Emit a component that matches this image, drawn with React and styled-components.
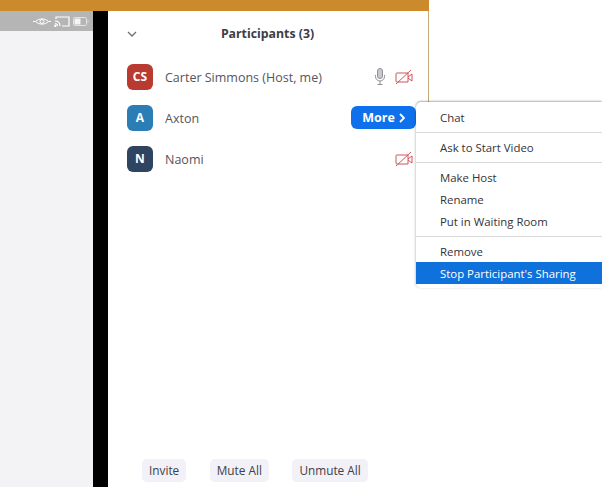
import React from 'react';
import styled, { createGlobalStyle } from 'styled-components';

const Global = createGlobalStyle`
  html, body { margin: 0; padding: 0; background: #fff; }
  body { font-family: "Open Sans", "Noto Sans", sans-serif; overflow: hidden; }
  * { box-sizing: border-box; }
`;

const Page = styled.div`
  position: relative;
  width: 602px;
  height: 487px;
  display: flex;
  flex-direction: column;
  overflow: hidden;
`;

const TopBar = styled.div`
  height: 11px;
  width: 429px;
  flex: none;
  background: #cb8a2c;
`;

const Body = styled.div`
  flex: 1;
  display: flex;
  min-height: 0;
`;

const LeftPane = styled.div`
  width: 93px;
  flex: none;
  background: #f3f3f6;
`;

const StatusStrip = styled.div`
  height: 20px;
  background: #b5b5b5;
  display: flex;
  align-items: center;
  justify-content: flex-end;
  gap: 3px;
  padding-right: 4px;
`;

const Divider = styled.div`
  width: 15px;
  flex: none;
  background: #000;
`;

const Panel = styled.div`
  width: 320px;
  flex: none;
  display: flex;
  flex-direction: column;
  background: #fff;
  padding-bottom: 5px;
`;

const PanelEdge = styled.div`
  position: absolute;
  left: 428px;
  top: 11px;
  width: 1px;
  height: 91px;
  background: #c9a87c;
`;

const Header = styled.div`
  height: 45px;
  flex: none;
  display: flex;
  align-items: center;
  padding-left: 19px;
`;

const Title = styled.div`
  flex: 1;
  text-align: center;
  font-size: 12.3px;
  font-weight: 700;
  color: #3d3d45;
  padding-right: 30px;
`;

const List = styled.div`
  flex: 1;
  display: flex;
  flex-direction: column;
`;

const Row = styled.div`
  height: 41px;
  display: flex;
  align-items: center;
  padding-left: 19px;
  padding-right: 15px;
`;

const Avatar = styled.div`
  width: 26px;
  height: 26px;
  border-radius: 6px;
  background: ${p => p.$color};
  color: #fff;
  font-size: 12px;
  font-weight: 700;
  display: flex;
  align-items: center;
  justify-content: center;
  margin-right: 12px;
`;

const Name = styled.div`
  flex: 1;
  padding-top: 1px;
  font-size: 12.5px;
  color: #55555e;
`;

const Icons = styled.div`
  display: flex;
  align-items: center;
  gap: 9px;
`;

const MoreButton = styled.div`
  width: 65px;
  height: 23px;
  margin-right: -3px;
  border-radius: 6px;
  background: #0e71eb;
  color: #fff;
  font-size: 12.5px;
  font-weight: 700;
  display: flex;
  align-items: center;
  justify-content: center;
  gap: 4px;
`;

const Footer = styled.div`
  display: flex;
  gap: 23.5px;
  padding-left: 34px;
`;

const FooterButton = styled.div`
  height: 23px;
  padding: 0 7px 2px;
  border-radius: 5px;
  background: #f1f1f7;
  color: #40404a;
  font-size: 11.8px;
  display: flex;
  align-items: center;
`;

const Menu = styled.div`
  position: absolute;
  left: 416px;
  top: 102px;
  width: 186px;
  height: 186px;
  padding-top: 4px;
  background: #fff;
  border-radius: 5px 0 0 5px;
  box-shadow: 0 -1px 2px rgba(0, 0, 0, 0.28), -1px 0 3px rgba(0, 0, 0, 0.1);
`;

const MenuItem = styled.div`
  height: 22px;
  padding-left: 24px;
  display: flex;
  align-items: center;
  font-size: 11.4px;
  color: ${p => (p.$active ? '#fff' : '#33333a')};
  background: ${p => (p.$active ? '#0e71dc' : 'transparent')};
`;

const MenuRule = styled.div`
  height: 1px;
  margin: 4px 0 3px;
  background: #d9d9d9;
`;

const Eye = () => (
  <svg width="18" height="9" viewBox="0 0 18 9" fill="none" stroke="#fff" strokeWidth="1">
    <path d="M0 4.500h2.500C6 1 12 1 15.500 4.500H18M2.500 4.500C6 8 12 8 15.500 4.500" />
    <circle cx="9" cy="4.500" r="2" />
  </svg>
);

const Cast = () => (
  <svg width="16" height="11" viewBox="0 0 16 11" fill="none" stroke="#fff" strokeWidth="1.200">
    <path d="M2 3V1h13v9H8" />
    <path d="M1 5c3 0 5 2 5 5M1 7.500c1.500 0 2.500 1 2.500 2.500" />
    <circle cx="1.300" cy="9.700" r=".6" fill="#fff" />
  </svg>
);

const Battery = () => (
  <svg width="16" height="9" viewBox="0 0 16 9" fill="none">
    <rect x="0.500" y="0.500" width="13" height="8" rx="1" stroke="#e2e2e2" />
    <rect x="1.500" y="1.500" width="6" height="6" fill="#f5f5f5" />
    <rect x="14.500" y="3" width="1" height="3" fill="#d6d6d6" />
  </svg>
);

const Chevron = () => (
  <svg width="10" height="6" viewBox="0 0 10 6" fill="none" stroke="#6e6e78" strokeWidth="1.300">
    <path d="M1 1l4 4 4-4" />
  </svg>
);

const Mic = () => (
  <svg width="12" height="17" viewBox="0 0 12 17" fill="none" stroke="#8f8f96" strokeWidth="1">
    <rect x="3.500" y="0.500" width="5" height="10" rx="2.500" fill="#c9c9cd" />
    <path d="M1.500 7v1.500a4.500 4.500 0 0 0 9 0V7M6 13v3M3.500 16.500h5" />
  </svg>
);

const VideoOff = () => (
  <svg width="18" height="16" viewBox="0 0 18 16" fill="none" stroke="#d0545a" strokeWidth="1">
    <path d="M13 4H2a1 1 0 0 0-1 1v7a1 1 0 0 0 1 1h11z" />
    <path d="M13 8l4-3v7l-4-3" />
    <path d="M1 15L16 1" />
  </svg>
);

const ChevronRight = () => (
  <svg width="6" height="10" viewBox="0 0 6 10" fill="none" stroke="#fff" strokeWidth="1.800">
    <path d="M1 1l4 4-4 4" />
  </svg>
);

export default function App() {
  return (
    <Page>
      <Global />
      <TopBar />
      <Body>
        <LeftPane>
          <StatusStrip>
            <Eye />
            <Cast />
            <Battery />
          </StatusStrip>
        </LeftPane>
        <Divider />
        <Panel>
          <Header>
            <Chevron />
            <Title>Participants (3)</Title>
          </Header>
          <List>
            <Row>
              <Avatar $color="#b83a30">CS</Avatar>
              <Name>Carter Simmons (Host, me)</Name>
              <Icons>
                <Mic />
                <VideoOff />
              </Icons>
            </Row>
            <Row>
              <Avatar $color="#2a7db5">A</Avatar>
              <Name>Axton</Name>
              <MoreButton>
                More <ChevronRight />
              </MoreButton>
            </Row>
            <Row>
              <Avatar $color="#2e4460">N</Avatar>
              <Name>Naomi</Name>
              <Icons>
                <VideoOff />
              </Icons>
            </Row>
          </List>
          <Footer>
            <FooterButton>Invite</FooterButton>
            <FooterButton>Mute All</FooterButton>
            <FooterButton>Unmute All</FooterButton>
          </Footer>
        </Panel>
      </Body>
      <PanelEdge />
      <Menu>
        <MenuItem>Chat</MenuItem>
        <MenuRule />
        <MenuItem>Ask to Start Video</MenuItem>
        <MenuRule />
        <MenuItem>Make Host</MenuItem>
        <MenuItem>Rename</MenuItem>
        <MenuItem>Put in Waiting Room</MenuItem>
        <MenuRule />
        <MenuItem>Remove</MenuItem>
        <MenuItem $active>Stop Participant's Sharing</MenuItem>
      </Menu>
    </Page>
  );
}
